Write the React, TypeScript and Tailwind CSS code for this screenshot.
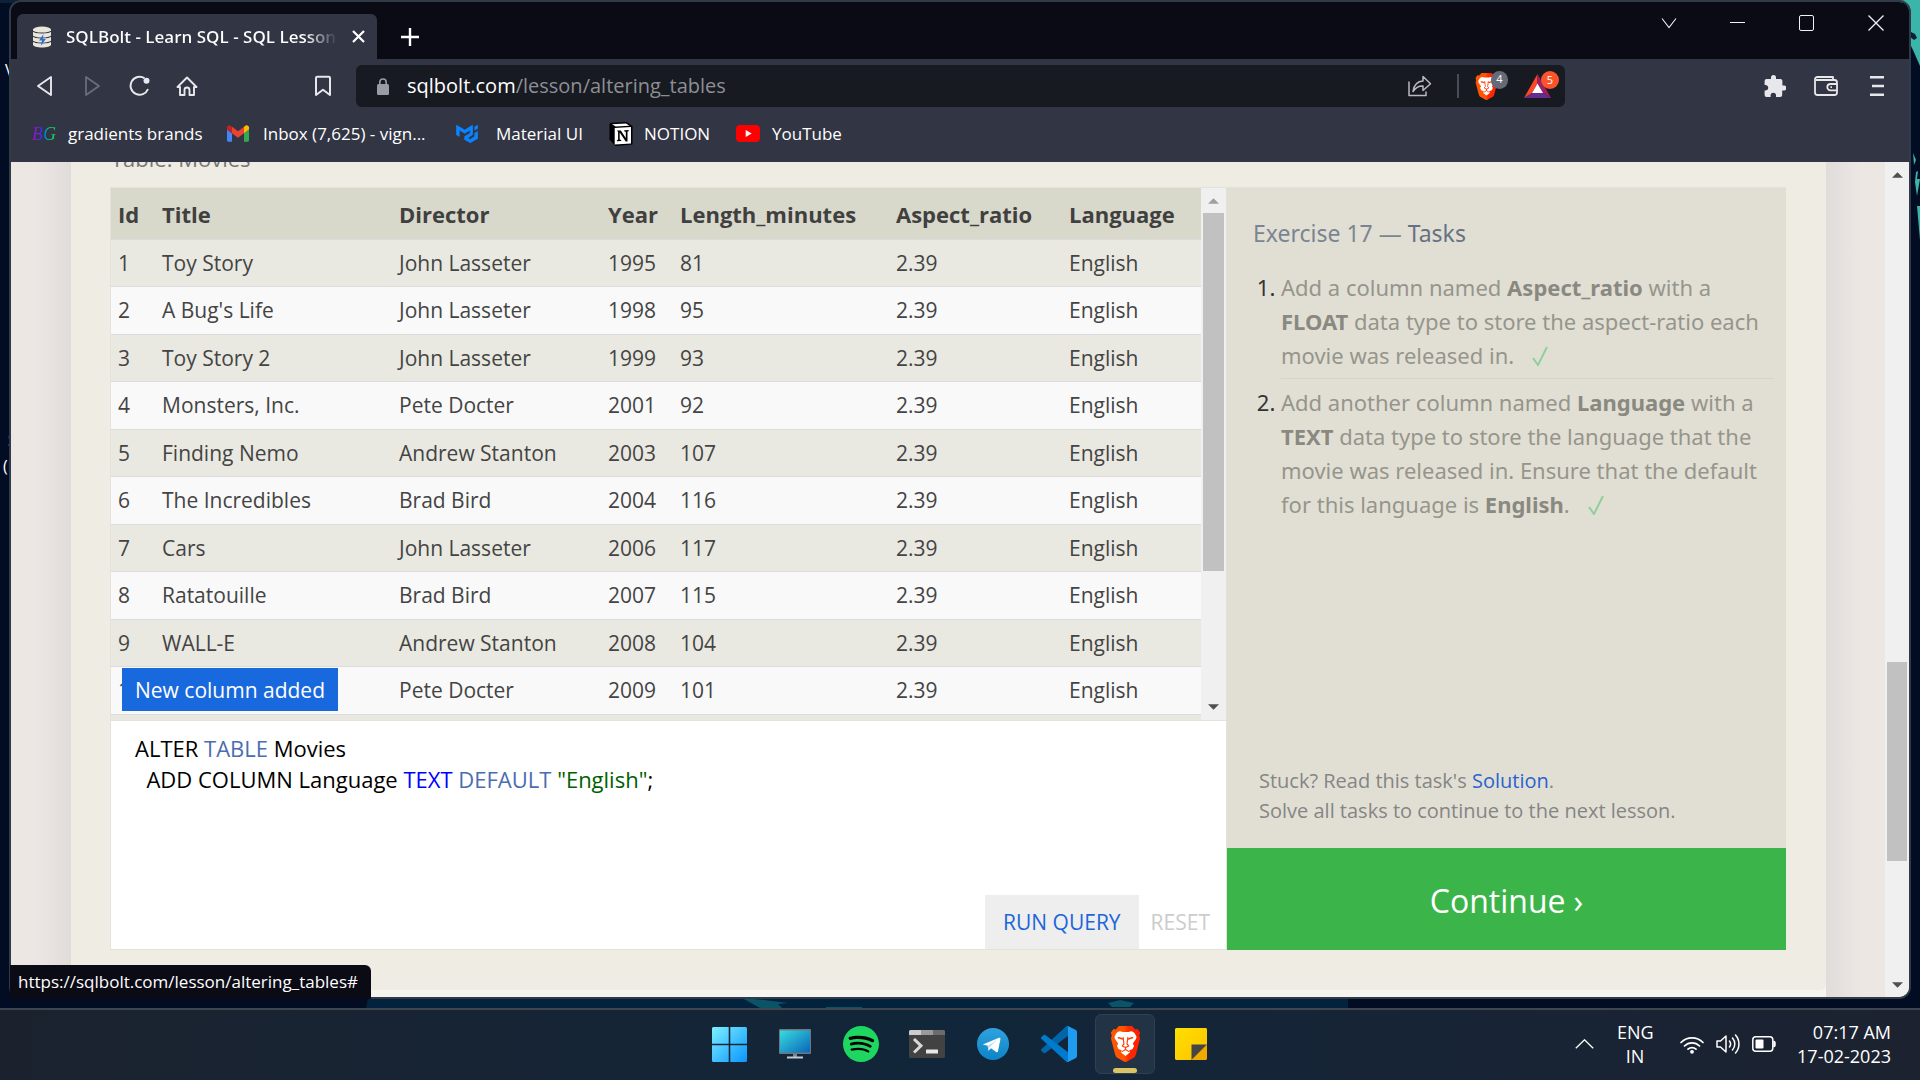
import React from "react";

type Movie = [number, string, string, number, number];

const movies: Movie[] = [
  [1, "Toy Story", "John Lasseter", 1995, 81],
  [2, "A Bug's Life", "John Lasseter", 1998, 95],
  [3, "Toy Story 2", "John Lasseter", 1999, 93],
  [4, "Monsters, Inc.", "Pete Docter", 2001, 92],
  [5, "Finding Nemo", "Andrew Stanton", 2003, 107],
  [6, "The Incredibles", "Brad Bird", 2004, 116],
  [7, "Cars", "John Lasseter", 2006, 117],
  [8, "Ratatouille", "Brad Bird", 2007, 115],
  [9, "WALL-E", "Andrew Stanton", 2008, 104],
  [10, "Up", "Pete Docter", 2009, 101],
];

/* ---------- shared drawings ---------- */

function BraveLion({ className, id }: { className: string; id: string }) {
  return (
    <svg viewBox="0 0 32 38" className={className} aria-hidden="true">
      <defs>
        <linearGradient id={id} x1="0" x2="1" y1="0" y2="0">
          <stop offset="0.45" stopColor="#ff5500" />
          <stop offset="0.6" stopColor="#ff2a00" />
          <stop offset="1" stopColor="#ff2000" />
        </linearGradient>
      </defs>
      <path
        fill={`url(#${id})`}
        d="M9 0h14l3.200 3.600 2.600-.5 2.700 4-1 3 .9 3-4.600 17.400c-.6 1.700-1.600 2.600-2.600 3.300L16.800 38h-1.600l-7.400-4.200c-1-.7-2-1.600-2.600-3.300L.6 13.100l.9-3-1-3 2.700-4 2.600.5z"
      />
      <path
        fill="#fff"
        d="M10.200 5.600 13 6.400h6l2.800-.8c1.700.2 3.200 1.200 4.200 2.600l1.700 3.400-.8 2.500-3.200 4.400 1.300 2.600-1.600 3.200-3.600 1.500.8 2.200L16 31.600 11.400 28l.8-2.200-3.600-1.500L7 21.100l1.300-2.600-3.200-4.400-.8-2.500L6 8.200c1-1.400 2.500-2.400 4.200-2.600z"
      />
      <g fill="none" stroke="#ff3c00" strokeLinecap="round" strokeLinejoin="round">
        <path strokeWidth="1.600" d="M8.500 12.500c1.500.2 2.900.5 4.200 1.200M23.500 12.500c-1.500.2-2.900.5-4.200 1.200" />
        <path strokeWidth="1.200" d="M13.500 12l.9 7-1.800 2 3.400 1.800 3.400-1.800-1.800-2 .9-7M16 22.800v2M12.800 26.800l3.200-2 3.200 2" />
      </g>
    </svg>
  );
}

function ScrollArrow({ up, dim }: { up?: boolean; dim?: boolean }) {
  return (
    <svg viewBox="0 0 12 6" className={dim ? "h-[6px] w-[11px] text-[#a0a0a0]" : "h-[6px] w-[11px] text-[#505050]"} aria-hidden="true">
      <path fill="currentColor" d={up ? "M0 6 6 0l6 6z" : "M0 0h12L6 6z"} />
    </svg>
  );
}

function Wallpaper() {
  return (
    <div className="absolute inset-0 overflow-hidden bg-[#020d24]" aria-hidden="true">
      <div className="h-[3px] w-full bg-linear-to-r from-[#0b2236] via-[#35525f] to-[#3d8a85]" />
      <svg viewBox="0 0 20 260" className="absolute right-0 top-0 h-[260px] w-[20px]">
        <path fill="#3bb5aa" d="M0 0h20v66L13 50 9 42V10L4 0z" />
        <path fill="#0a1f33" d="M9 31l6 3 2 4-3 2-5-4z" />
        <path fill="#3bb5aa" d="M13 153l3 7-2 5zM16 172l2-1-1 8h3l-3 17-2-14zM17 206h3v34z" />
      </svg>
      <span className="absolute left-[5px] top-[58px] font-['Open_Sans',sans-serif] text-base text-white">V</span>
      <span className="absolute left-[8px] top-[428px] font-['Open_Sans',sans-serif] text-base text-white">S</span>
      <span className="absolute left-[3px] top-[454px] font-['Open_Sans',sans-serif] text-base text-white">(D</span>
      <svg viewBox="0 0 1920 10" preserveAspectRatio="none" className="absolute bottom-[72px] left-0 h-[10px] w-full">
        <path fill="#03223d" d="M368 0h980v10H366z" />
        <path fill="#0b5366" d="M742 0l22 2 24 3-10 1 4 4h-22zM826 9h36v1h-36zM1108 5l12-3 14 3-4 4h-18z" />
      </svg>
    </div>
  );
}

/* ---------- browser chrome ---------- */

function TitleBar() {
  return (
    <header className="flex h-[57px] items-start justify-between bg-[#0b0b15]">
      <div className="ml-1.5 mt-3 flex h-[45px] items-center">
        <div className="flex h-full w-[360px] items-center rounded-t-md bg-[#323543] pl-[15px] pr-3">
          <svg viewBox="0 0 20 22" className="h-[22px] w-5 shrink-0" aria-hidden="true">
            <path fill="#e9e6dc" d="M1 3.500v15C1 20.500 5 21.500 10 21.500s9-1 9-3v-15z" />
            <ellipse cx="10" cy="3.500" rx="9" ry="3" fill="#e9e6dc" />
            <path fill="none" stroke="#323543" strokeWidth="1.100" d="M1 5c2 2.700 16 2.700 18 0M1 10c2 2.700 16 2.700 18 0M1 15c2 2.700 16 2.700 18 0" />
            <path fill="#2f6fd0" d="M11.500 8 7 14.500h3L8.800 20l5-7h-3z" />
          </svg>
          <span className="ml-3.5 flex-1 overflow-hidden whitespace-nowrap bg-linear-to-r from-white from-88% to-[#323543] bg-clip-text text-[17px] font-semibold text-transparent">
            SQLBolt - Learn SQL - SQL Lesson
          </span>
          <button type="button" aria-label="Close tab" className="ml-3.5">
            <svg viewBox="0 0 13 13" className="h-[13px] w-[13px]">
              <path stroke="#fff" strokeWidth="2.200" d="m1 1 11 11M12 1 1 12" />
            </svg>
          </button>
        </div>
        <button type="button" aria-label="New tab" className="ml-6">
          <svg viewBox="0 0 18 18" className="h-[18px] w-[18px]">
            <path stroke="#fff" strokeWidth="2.400" d="M9 0v18M0 9h18" />
          </svg>
        </button>
      </div>
      <div className="mr-[25px] mt-3 flex items-center gap-[53px] text-[#f2f2f4]">
        <button type="button" aria-label="Search tabs">
          <svg viewBox="0 0 16 18" className="h-[18px] w-4" fill="none" stroke="currentColor" strokeWidth="1.100">
            <path d="m1 4.500 7 9 7-9" />
          </svg>
        </button>
        <button type="button" aria-label="Minimize">
          <svg viewBox="0 0 16 18" className="h-[18px] w-4" stroke="currentColor">
            <path d="M0 8.500h15" />
          </svg>
        </button>
        <button type="button" aria-label="Maximize">
          <svg viewBox="0 0 16 18" className="h-[18px] w-4" fill="none" stroke="currentColor">
            <rect x=".5" y="1.500" width="14" height="15" rx="1.500" />
          </svg>
        </button>
        <button type="button" aria-label="Close window">
          <svg viewBox="0 0 16 18" className="h-[18px] w-4" stroke="currentColor" strokeWidth="1.300">
            <path d="m.5 1.500 15 15M15.500 1.500l-15 15" />
          </svg>
        </button>
      </div>
    </header>
  );
}

function Toolbar() {
  return (
    <div className="flex items-center pt-1.5 text-[#e8e8ec]">
      <div className="flex w-[345px] items-center justify-between pl-6 pr-6">
        <div className="flex items-center gap-[25px]">
          <button type="button" aria-label="Back">
            <svg viewBox="0 0 22 22" className="h-[22px] w-[22px]" fill="none" stroke="currentColor" strokeWidth="1.900" strokeLinejoin="round">
              <path d="M16 2v18L3 11z" />
            </svg>
          </button>
          <button type="button" aria-label="Forward" className="text-[#6a6d79]">
            <svg viewBox="0 0 22 22" className="h-[22px] w-[22px]" fill="none" stroke="currentColor" strokeWidth="1.800" strokeLinejoin="round">
              <path d="M4 2v18l13-9z" />
            </svg>
          </button>
          <button type="button" aria-label="Reload">
            <svg viewBox="0 0 22 22" className="h-[22px] w-[22px]" fill="none" stroke="currentColor" strokeWidth="2">
              <path d="M15.500 3.200A9 9 0 1 0 19 14" />
              <circle cx="17.500" cy="5.800" r="3" fill="currentColor" stroke="none" />
            </svg>
          </button>
          <button type="button" aria-label="Home">
            <svg viewBox="0 0 22 22" className="h-[22px] w-[22px]" fill="none" stroke="currentColor" strokeWidth="1.900" strokeLinejoin="round" strokeLinecap="round">
              <path d="M1.500 12 11 2.500l9.500 9.500H18v8h-4.500v-5a2.500 2.500 0 0 0-5 0v5H4v-8z" />
            </svg>
          </button>
        </div>
        <button type="button" aria-label="Bookmark this page">
          <svg viewBox="0 0 18 22" className="h-[22px] w-[18px]" fill="none" stroke="currentColor" strokeWidth="2" strokeLinejoin="round">
            <path d="M2 3a1.200 1.200 0 0 1 1.200-1.200h11.600A1.200 1.200 0 0 1 16 3v17l-7-5.300L2 20z" />
          </svg>
        </button>
      </div>
      <div className="flex h-[42px] min-w-0 flex-1 items-center rounded-md bg-[#181a21] pl-[21px]">
        <svg viewBox="0 0 12 17" className="h-[17px] w-3 shrink-0" aria-hidden="true">
          <rect y="6" width="12" height="11" rx="1.500" fill="#9a9ca5" />
          <path fill="none" stroke="#9a9ca5" strokeWidth="1.600" d="M2.800 7V4.200a3.200 3.200 0 0 1 6.400 0V7" />
        </svg>
        <a href="#" className="ml-[18px] flex-1 whitespace-nowrap text-[20px] text-white">
          sqlbolt.com<span className="text-[#8c8f96]">/lesson/altering_tables</span>
        </a>
        <button type="button" aria-label="Share" className="text-[#b9bac0]">
          <svg viewBox="0 0 24 22" className="h-[22px] w-6" fill="none" stroke="currentColor" strokeWidth="1.500" strokeLinejoin="round">
            <path d="M1 6.500V20.500h17v-4" />
            <path d="M5 16.500C6 9.500 9 6.300 15 6V1.500l7.500 7.200L15 15.500V11c-4-.2-7 1-10 5.500z" />
          </svg>
        </button>
        <span className="ml-[25px] h-6 w-0.5 bg-[#4a4c55]" />
        <button type="button" aria-label="Brave Shields" className="relative ml-4">
          <BraveLion id="brave-small" className="h-[27px] w-[23px]" />
          <span className="absolute -top-0.5 left-4 flex h-[18px] w-[17px] items-center justify-center rounded-full bg-[#666976] text-[11px] text-white">4</span>
        </button>
        <button type="button" aria-label="Brave Rewards" className="relative ml-[26px] mr-3.5">
          <svg viewBox="0 0 27 24" className="h-6 w-[27px]">
            <path fill="#ff4724" d="M13.500 0 0 24l8-5 5.500-9.500z" />
            <path fill="#9e1f63" d="M13.500 0 27 24l-8-5-5.500-9.500z" />
            <path fill="#662d91" d="M0 24h27l-8-5H8z" />
            <path fill="#fff" d="M13.500 9.500 8 19h11z" />
          </svg>
          <span className="absolute -top-[3px] left-[17px] flex h-[18px] w-[18px] items-center justify-center rounded-full bg-[#fb542b] text-[11px] text-white">5</span>
        </button>
      </div>
      <div className="flex w-[344px] items-center justify-end gap-7 pr-[25px]">
        <button type="button" aria-label="Extensions">
          <svg viewBox="0 0 22 22" className="h-[22px] w-[22px]" fill="currentColor">
            <path d="M20 10.500h-1.600V6a2 2 0 0 0-2-2H12V2.500a2.500 2.500 0 0 0-5 0V4H2.600a2 2 0 0 0-2 2v4H2a2.800 2.800 0 0 1 0 5.500H.6V20a2 2 0 0 0 2 2h4v-1.600a2.700 2.700 0 0 1 5.400 0V22h4.200a2 2 0 0 0 2-2v-4.500H20a2.500 2.500 0 0 0 0-5z" />
          </svg>
        </button>
        <button type="button" aria-label="Wallet">
          <svg viewBox="0 0 24 20" className="h-5 w-6" fill="none" stroke="currentColor" strokeWidth="1.800" strokeLinejoin="round">
            <path d="M1 3.500A2.500 2.500 0 0 1 3.500 1H19v3h1.500A2.500 2.500 0 0 1 23 6.500v10a2.500 2.500 0 0 1-2.500 2.500h-17A2.500 2.500 0 0 1 1 16.500zM2 4h17" />
            <path d="M23 8h-6.500a3.200 3.200 0 0 0 0 6.400H23M16.500 11.200h1.500" />
          </svg>
        </button>
        <button type="button" aria-label="Menu" className="ml-1">
          <svg viewBox="0 0 14 20" className="h-5 w-3.5" stroke="currentColor" strokeWidth="2.400">
            <path d="M0 1.200h14M2 10h12M0 18.800h14" />
          </svg>
        </button>
      </div>
    </div>
  );
}

function BookmarkBar() {
  return (
    <nav className="flex h-[55px] items-center whitespace-nowrap pb-0.5 pl-[21px] text-[17px] text-white">
      <a href="#" className="flex w-[195px] items-center gap-3">
        <span className="w-6 bg-linear-to-r from-[#8a17d6] from-20% via-[#1a2ee8] via-45% to-[#10d66a] to-70% bg-clip-text font-['Liberation_Serif',serif] text-lg italic text-transparent" aria-hidden="true">
          BG
        </span>
        gradients brands
      </a>
      <a href="#" className="flex w-[229px] items-center gap-3.5">
        <svg viewBox="52 42 88 66" className="h-[17px] w-[22px]" aria-hidden="true">
          <path fill="#4285f4" d="M58 108h14V74L52 59v43c0 3.320 2.690 6 6 6" />
          <path fill="#34a853" d="M120 108h14c3.320 0 6-2.690 6-6V59l-20 15" />
          <path fill="#fbbc04" d="M120 48v26l20-15v-8c0-7.420-8.470-11.650-14.400-7.200" />
          <path fill="#ea4335" d="M72 74V48l24 18 24-18v26L96 92" />
          <path fill="#c5221f" d="M52 51v8l20 15V48l-5.600-4.200c-5.940-4.450-14.400-.22-14.400 7.200" />
        </svg>
        Inbox (7,625) - vign...
      </a>
      <a href="#" className="flex w-[153px] items-center gap-[18px]">
        <svg viewBox="0 0 24 24" className="h-[22px] w-[22px]" aria-hidden="true">
          <path
            fill="#0a84ff"
            stroke="#0a84ff"
            strokeWidth=".8"
            strokeLinejoin="round"
            d="M0.500 2.475v10.390l3 1.733V7.670l6 3.465 6-3.465v3.465l-6 3.463v3.464l6 3.463 8-4.700V9.402l-3 1.733v3.463l-5 3.464-3-1.732 5.500-3.465V2.475L9.500 7.670zM23.500 2.477l-3 1.730V7.670l3-1.732z"
          />
        </svg>
        Material UI
      </a>
      <a href="#" className="flex w-[127px] items-center gap-[11px]">
        <svg viewBox="0 0 24 24" className="h-6 w-6" aria-hidden="true">
          <path fill="#000" d="M1.500.8 17.500 0 23.500 4v18.500l-17 1.500L.5 17.500V2z" />
          <path fill="#fff" d="M3 2.300 17 1.400l3.500 2.300-13.800.9z" />
          <path fill="#fff" d="M5.700 6 22 5v16.500L5.700 22.500z" />
          <path fill="#000" d="M8 8.600h3.800l5 7.400V9.700l-1.500-.3V8.300l4.400-.2v1.100l-1.200.4v9.800h-1.800l-6-8.800v7l1.500.3V19l-4.300.3v-1.100l1.200-.4V9.900z" />
        </svg>
        NOTION
      </a>
      <a href="#" className="flex items-center gap-3">
        <svg viewBox="0 0 24 17" className="h-[17px] w-6" aria-hidden="true">
          <rect width="24" height="17" rx="4" fill="#f00" />
          <path fill="#fff" d="m9.700 5 6 3.500-6 3.500z" />
        </svg>
        YouTube
      </a>
    </nav>
  );
}

/* ---------- lesson page ---------- */

function MovieTable() {
  return (
    <div className="relative flex h-[532px] overflow-hidden bg-[#e9e9e1]">
      <div className="min-w-0 flex-1">
        <table className="w-full table-fixed border-collapse text-left text-[21px] text-[#444]">
          <colgroup>
            <col className="w-[44px]" />
            <col className="w-[237px]" />
            <col className="w-[209px]" />
            <col className="w-[72px]" />
            <col className="w-[216px]" />
            <col className="w-[173px]" />
            <col className="w-[139px]" />
          </colgroup>
          <thead>
            <tr className="h-[51px] border-b border-[#dcdcdc] bg-[#d8d8cb] text-[#404040]">
              {["Id", "Title", "Director", "Year", "Length_minutes", "Aspect_ratio", "Language"].map((h) => (
                <th key={h} scope="col" className="whitespace-nowrap pl-[7px] pt-0.5 text-[22px] font-bold">
                  {h}
                </th>
              ))}
            </tr>
          </thead>
          <tbody>
            {movies.map(([id, title, director, year, length]) => (
              <tr key={id} className="h-12 border-b border-[#dcdcdc] odd:h-[47px] odd:bg-[#e9e9e1] even:bg-[#f9f9f9]">
                <td className="pl-[7px] pt-0.5">{id}</td>
                <td className="pl-[7px] pt-0.5">{title}</td>
                <td className="pl-[7px] pt-0.5">{director}</td>
                <td className="pl-[7px] pt-0.5">{year}</td>
                <td className="pl-[7px] pt-0.5">{length}</td>
                <td className="pl-[7px] pt-0.5">2.39</td>
                <td className="pl-[7px] pt-0.5">English</td>
              </tr>
            ))}
          </tbody>
        </table>
      </div>
      <div className="flex w-[25px] flex-col items-center bg-[#f0f0f0] pb-2.5 pt-2.5">
        <ScrollArrow up dim />
        <div className="mt-[9px] h-[358px] w-[21px] bg-[#c1c1c1]" />
        <div className="mt-auto">
          <ScrollArrow />
        </div>
      </div>
      <div role="status" className="absolute bottom-[9px] left-[11px] flex h-[43px] items-center bg-[#1869dd] px-[13px] pt-0.5 text-[21px] text-white">
        New column added
      </div>
    </div>
  );
}

function QueryEditor() {
  return (
    <div className="flex flex-1 flex-col justify-between border-t border-[#e3e3da] bg-white">
      <div
        role="textbox"
        aria-label="SQL query"
        aria-multiline="true"
        contentEditable
        suppressContentEditableWarning
        className="whitespace-pre pl-6 pt-3 text-[22px] leading-[31px] text-black outline-none"
      >
        <div>
          ALTER <span className="text-[#4a6db0]">TABLE</span> Movies
        </div>
        <div>
          {"  "}ADD COLUMN Language <span className="text-[#0000ff]">TEXT</span> <span className="text-[#4a6db0]">DEFAULT</span>{" "}
          <span className="text-[#006000]">"English"</span>;
        </div>
      </div>
      <div className="flex justify-end text-[21px]">
        <button type="button" className="h-[54px] bg-[#eee] px-[18px] pt-0.5 text-[#1b66d9]">
          RUN QUERY
        </button>
        <button type="button" className="h-[54px] pl-3 pr-4 pt-0.5 text-[#ccc]">
          RESET
        </button>
      </div>
    </div>
  );
}

function Check() {
  return (
    <svg viewBox="0 0 16 20" className="ml-[18px] inline-block h-5 w-4 align-[-2px]" role="img" aria-label="Completed">
      <path fill="none" stroke="#8fd09a" strokeWidth="2" d="m1 12 5 7L15 1" />
    </svg>
  );
}

function TaskPanel() {
  return (
    <aside className="flex w-[560px] shrink-0 flex-col border-l border-t border-[#e4e3da] bg-[#e1dfd4]">
      <h2 className="mt-7 pl-[26px] font-['Noto_Sans',sans-serif] text-[23px] leading-[34px] text-[#7b8591]">
        Exercise 17 — <span className="text-[#667282]">Tasks</span>
      </h2>
      <ol className="ml-[54px] mr-3 mt-5 list-decimal font-['Noto_Sans',sans-serif] text-[22px] leading-[34px] marker:text-[#333]">
        <li className="border-b border-[#d6d4ca] pb-1.5">
          <p className="whitespace-nowrap text-[#96958c]">
            Add a column named <b className="text-[#8a8981]">Aspect_ratio</b> with a<br />
            <b className="text-[#8a8981]">FLOAT</b> data type to store the aspect-ratio each
            <br />
            movie was released in.
            <Check />
          </p>
        </li>
        <li className="pt-1.5">
          <p className="whitespace-nowrap text-[#96958c]">
            Add another column named <b className="text-[#8a8981]">Language</b> with a<br />
            <b className="text-[#8a8981]">TEXT</b> data type to store the language that the
            <br />
            movie was released in. Ensure that the default
            <br />
            for this language is <b className="text-[#8a8981]">English</b>.
            <Check />
          </p>
        </li>
      </ol>
      <div className="mb-[22px] mt-auto pl-8 text-[20px] leading-[30px] text-[#858585]">
        <p>
          Stuck? Read this task's <a href="#" className="text-[#2a62d0]">Solution</a>.
        </p>
        <p>Solve all tasks to continue to the next lesson.</p>
      </div>
      <a href="#" className="flex h-[102px] items-center justify-center gap-2 bg-[#3bb54a] pt-1 text-[32px] text-white">
        Continue <span>›</span>
      </a>
    </aside>
  );
}

function LessonPage() {
  return (
    <main className="flex min-h-0 flex-1 overflow-hidden bg-[#ece6e3]">
      <div className="w-[60px] bg-linear-to-r from-[#ede7e4] from-40% to-[#e0dcda]" />
      <div className="flex min-w-0 flex-1 flex-col bg-[#f5f4ef]">
        <section className="flex min-h-0 flex-1 flex-col overflow-hidden rounded-b-md bg-[#efece4] pb-10 pl-[39px] pr-10">
          <p className="-mt-[17px] h-[42px] shrink-0 pl-px text-[22px] leading-[26px] text-[#777]">Table: Movies</p>
          <div className="flex min-h-0 flex-1">
            <div className="flex min-w-0 flex-1 flex-col border border-r-0 border-[#e3e3da]">
              <MovieTable />
              <QueryEditor />
            </div>
            <TaskPanel />
          </div>
        </section>
        <div className="h-[7px]" />
      </div>
      <div className="w-[59px] bg-linear-to-l from-[#ede7e4] from-40% to-[#e0dcda]" />
      <div className="flex w-6 flex-col items-center bg-[#f0f0f0] pb-[9px] pt-2.5">
        <ScrollArrow up />
        <div className="flex-[484]" />
        <div className="w-5 flex-[199] bg-[#c1c1c1]" />
        <div className="flex-[121]" />
        <ScrollArrow />
      </div>
    </main>
  );
}

/* ---------- taskbar ---------- */

function Taskbar() {
  return (
    <footer className="relative grid h-[72px] grid-cols-[1fr_auto_1fr] items-center border-t-2 border-[#40464f] bg-linear-to-r from-[#1b222e] via-[#11263a] to-[#1c2230] pb-0.5 text-white">
      <div />
      <div className="flex items-center">
        <button type="button" aria-label="Start" className="flex h-[60px] w-[66px] items-center justify-center">
          <svg viewBox="0 0 35 35" className="h-[35px] w-[35px]">
            <defs>
              <linearGradient id="win" x1="0" y1="0" x2="35" y2="35" gradientUnits="userSpaceOnUse">
                <stop stopColor="#7df0ff" />
                <stop offset="1" stopColor="#0a95ff" />
              </linearGradient>
            </defs>
            <path fill="url(#win)" d="M1.500 0H16.700v16.700H0V1.500A1.500 1.500 0 0 1 1.500 0zM18.300 0h15.200A1.500 1.500 0 0 1 35 1.500v15.200H18.300zM0 18.300h16.700V35H1.500A1.500 1.500 0 0 1 0 33.500zM18.300 18.300H35v15.200a1.500 1.500 0 0 1-1.500 1.500H18.300z" />
          </svg>
        </button>
        <button type="button" aria-label="This PC" className="flex h-[60px] w-[66px] items-center justify-center">
          <svg viewBox="0 0 32 30" className="h-[30px] w-8">
            <defs>
              <linearGradient id="pc" x1="0" y1="0" x2="1" y2="1">
                <stop stopColor="#37dce0" />
                <stop offset="1" stopColor="#0a66b8" />
              </linearGradient>
            </defs>
            <path fill="#7b8791" d="M14 24h4v4h-4z" />
            <path fill="#c3cad0" d="M8 27.500h16V29.500H8z" />
            <rect width="32" height="25" rx="1" fill="#6d7780" />
            <rect x="1" y="1.500" width="30" height="22" fill="url(#pc)" />
          </svg>
        </button>
        <button type="button" aria-label="Spotify" className="flex h-[60px] w-[66px] items-center justify-center">
          <svg viewBox="0 0 24 24" className="h-9 w-9">
            <circle cx="12" cy="12" r="11" fill="#000" />
            <path
              fill="#1ed760"
              d="M12 0C5.400 0 0 5.400 0 12s5.400 12 12 12 12-5.400 12-12S18.660 0 12 0zm5.521 17.340c-.24.359-.66.48-1.021.24-2.820-1.740-6.360-2.101-10.561-1.141-.418.122-.779-.179-.899-.539-.12-.421.18-.78.54-.9 4.560-1.021 8.520-.6 11.640 1.320.42.18.479.659.301 1.020zm1.440-3.300c-.301.42-.841.6-1.262.3-3.239-1.980-8.159-2.580-11.939-1.380-.479.12-1.020-.12-1.140-.6-.12-.48.12-1.021.6-1.141C9.600 9.900 15 10.561 18.720 12.840c.361.181.54.78.241 1.200zm.12-3.360C15.240 8.400 8.820 8.160 5.160 9.301c-.6.179-1.200-.181-1.380-.721-.18-.601.18-1.200.72-1.381 4.260-1.260 11.280-1.020 15.721 1.621.539.3.719 1.020.419 1.560-.299.421-1.020.599-1.559.3z"
            />
          </svg>
        </button>
        <button type="button" aria-label="Terminal" className="flex h-[60px] w-[66px] items-center justify-center">
          <svg viewBox="0 0 36 28" className="h-7 w-9">
            <rect width="36" height="28" rx="1.500" fill="#424242" />
            <path fill="#ccc" d="M1.500 0H12v5H0V1.500A1.500 1.500 0 0 1 1.500 0z" />
            <path fill="#9a9a9a" d="M12 0h12v5H12z" />
            <path fill="#6c6c6c" d="M24 0h10.500A1.500 1.500 0 0 1 36 1.500V5H24z" />
            <path fill="none" stroke="#d9d9d9" strokeWidth="3" d="m5 9 7 6.800-7 6.700" />
            <rect x="17" y="19.500" width="12" height="4" rx=".5" fill="#e8e8e8" />
          </svg>
        </button>
        <button type="button" aria-label="Telegram" className="flex h-[60px] w-[66px] items-center justify-center">
          <svg viewBox="0 0 32 32" className="h-8 w-8">
            <defs>
              <linearGradient id="tg" x1="0" y1="0" x2="0" y2="1">
                <stop stopColor="#2fa3e0" />
                <stop offset="1" stopColor="#0d84c6" />
              </linearGradient>
            </defs>
            <circle cx="16" cy="16" r="16" fill="url(#tg)" />
            <path fill="#fff" d="M5.800 16.500 22 9.800c1-.4 1.700.2 1.400 1.500L21 23.200c-.2 1-1 1.300-1.800.8L14 20.300l-2.600 2.500-.7-5z" />
            <path fill="#bcdcf0" d="m10.700 17.800 9-5.600-7 6.700-1.300 3.900z" />
          </svg>
        </button>
        <button type="button" aria-label="Visual Studio Code" className="flex h-[60px] w-[66px] items-center justify-center">
          <svg viewBox="0 0 100 100" className="h-9 w-9">
            <path fill="#0065a9" d="M96.460 10.780 75.870.870a6.240 6.240 0 0 0-7.100 1.210L1.360 63.580a4.160 4.160 0 0 0 0 6.160l5.510 5.010a4.160 4.160 0 0 0 5.320.24L93.300 13.400c2.700-2.100 6.700-.1 6.700 3.300v-.3a6.250 6.250 0 0 0-3.540-5.620z" />
            <path fill="#007acc" d="m96.460 89.220-20.590 9.910a6.240 6.240 0 0 1-7.100-1.210L1.360 36.420a4.160 4.160 0 0 1 0-6.160l5.510-5.010a4.160 4.160 0 0 1 5.320-.24L93.300 86.600c2.700 2.100 6.700.1 6.700-3.300v.3a6.250 6.250 0 0 1-3.540 5.620z" />
            <path fill="#1f9cf0" d="M75.870 99.130a6.240 6.240 0 0 1-7.100-1.210c2.310 2.310 6.250.67 6.250-2.590V4.670c0-3.260-3.940-4.900-6.250-2.590a6.240 6.240 0 0 1 7.100-1.210l20.590 9.910A6.250 6.250 0 0 1 100 16.410v67.180a6.250 6.250 0 0 1-3.540 5.630z" />
          </svg>
        </button>
        <button type="button" aria-label="Brave" className="flex h-[60px] w-[66px] items-center justify-center">
          <span className="relative flex h-[60px] w-[60px] items-center justify-center rounded-md border border-[#2f4052] bg-[#223345]">
            <BraveLion id="brave-large" className="h-9 w-[31px]" />
            <span className="absolute bottom-0 h-[5px] w-6 rounded-full bg-[#dac465]" />
          </span>
        </button>
        <button type="button" aria-label="Sticky Notes" className="flex h-[60px] w-[66px] items-center justify-center">
          <svg viewBox="0 0 32 32" className="h-8 w-8">
            <defs>
              <linearGradient id="note" x1="0" y1="0" x2="1" y2="1">
                <stop stopColor="#ffe000" />
                <stop offset="1" stopColor="#ffc000" />
              </linearGradient>
            </defs>
            <path fill="url(#note)" d="M1 0h30l1 1v15.500L17 32H1l-1-1V1z" />
            <path fill="#454545" d="M16.500 16.500H32L16.500 32z" />
            <path fill="#efa900" d="M32 16.500V31l-1 1H16.500z" />
          </svg>
        </button>
      </div>
      <div className="flex items-center justify-end pr-[29px] text-[18px] leading-[24px]">
        <button type="button" aria-label="Show hidden icons">
          <svg viewBox="0 0 19 10" className="h-2.5 w-[19px]" fill="none" stroke="#fff" strokeWidth="1.300">
            <path d="m.8 9.300 8.700-8.500 8.700 8.500" />
          </svg>
        </button>
        <button type="button" className="ml-[23px] w-9 text-center">
          ENG
          <br />
          IN
        </button>
        <button type="button" aria-label="Network, volume and battery" className="ml-[27px] flex items-center gap-3">
          <svg viewBox="0 0 24 19" className="h-[19px] w-6" fill="none" stroke="#fff" strokeWidth="1.700" strokeLinecap="round">
            <path d="M1 7.500a15.500 15.500 0 0 1 22 0M4.500 11a10.600 10.600 0 0 1 15 0M8 14.200a5.700 5.700 0 0 1 8 0" />
            <circle cx="12" cy="16.800" r="1.900" fill="#fff" stroke="none" />
          </svg>
          <svg viewBox="0 0 24 20" className="h-5 w-6" fill="none" stroke="#fff" strokeWidth="1.500" strokeLinejoin="round" strokeLinecap="round">
            <path d="M1 7h3.500l5.500-5v16l-5.500-5H1zM13.500 7a5 5 0 0 1 0 6M16.500 4a9 9 0 0 1 0 12M19.500 1a13.500 13.500 0 0 1 0 18" />
          </svg>
          <svg viewBox="0 0 24 16" className="h-4 w-6" fill="none" stroke="#fff" strokeWidth="1.500">
            <rect x=".8" y=".8" width="20" height="14.400" rx="3" />
            <rect x="3.500" y="3.500" width="8" height="9" rx="1" fill="#fff" stroke="none" />
            <path d="M22 5.500c1.400 0 1.400 5 0 5z" fill="#fff" />
          </svg>
        </button>
        <button type="button" className="w-[115px] whitespace-nowrap text-right">
          07:17 AM
          <br />
          17-02-2023
        </button>
      </div>
    </footer>
  );
}

export default function App() {
  return (
    <div className="relative flex h-screen flex-col overflow-hidden font-['Open_Sans','Noto_Sans',sans-serif]">
      <Wallpaper />
      <div className="relative mx-[9px] mb-[9px] flex min-h-0 flex-1 flex-col">
        <div className="flex min-h-0 flex-1 flex-col overflow-hidden rounded-xl border-2 border-[#313b48]">
          <TitleBar />
          <div className="bg-[#323543]">
            <Toolbar />
            <BookmarkBar />
          </div>
          <LessonPage />
        </div>
        <div className="absolute bottom-0 left-px flex h-[34px] items-center rounded-tr-md bg-[#0b0b15] pl-2 pr-[13px] text-[17px] text-white">
          https://sqlbolt.com/lesson/altering_tables#
        </div>
      </div>
      <Taskbar />
    </div>
  );
}
